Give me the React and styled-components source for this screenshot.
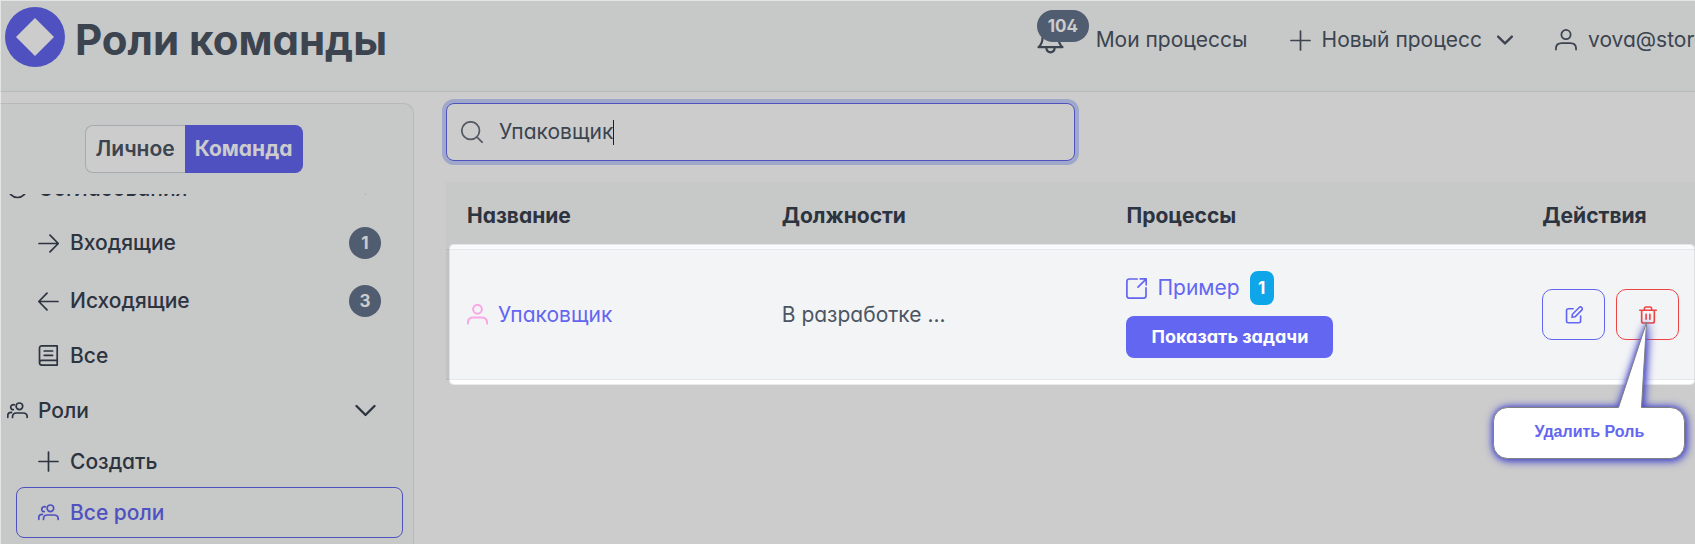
import React from "react";
import styled, { createGlobalStyle, css } from "styled-components";

const GlobalStyle = createGlobalStyle`
  *, *::before, *::after { box-sizing: border-box; }
  body {
    margin: 0;
    background: #ffffff;
    color: #4b5563;
    font-family: Inter, "Liberation Sans", sans-serif;
    font-feature-settings: "cv02", "cv03", "cv04", "cv11";
    font-size: 21px;
    line-height: 26px;
  }
  button, input { font: inherit; font-feature-settings: inherit; color: inherit; }
  a { color: inherit; text-decoration: none; }
`;

/* ---------- icons ---------- */

const Svg = styled.svg`
  display: block;
  flex: none;
  width: ${(p) => p.$size || 21}px;
  height: ${(p) => p.$size || 21}px;
  fill: none;
  stroke: currentColor;
  stroke-width: ${(p) => p.$weight || 1.7};
  stroke-linecap: round;
  stroke-linejoin: round;
`;

const paths = {
  plus: <path d="M10.5 1v19M1 10.5h19" />,
  right: <path d="M1 10.5h19M12 2.200l8.300 8.300-8.300 8.300" />,
  left: <path d="M20 10.5H1M9 2.200L.8 10.5 9 18.8" />,
  down: <path d="M1.5 6l9 9 9-9" />,
  book: (
    <path d="M4 .9h15.2v19.2H3.8a2.3 2.3 0 0 1-2.3-2.3V3.2A2.3 2.3 0 0 1 4 .9zM1.5 17.6a2.3 2.3 0 0 1 2.3-2.2h15.4M6.2 6h8.4M6.2 10.3h8.4" />
  ),
  check: <circle cx="10.5" cy="10.5" r="9" />,
  search: (
    <>
      <circle cx="9.2" cy="9.2" r="8.4" />
      <path d="M15.3 15.3l5 5" />
    </>
  ),
  user: (
    <>
      <circle cx="10.5" cy="5.3" r="4.4" />
      <path d="M.9 19.6v-.8c0-3.4 2.4-5.3 5.6-5.3h8c3.2 0 5.6 1.9 5.6 5.3v.8" />
    </>
  ),
  users: (
    <>
      <circle cx="12.4" cy="6.3" r="3.3" />
      <path d="M5.5 17.5v-.6c0-2.5 1.5-3.9 3.9-3.9h6.7c2.5 0 4.1 1.4 4.1 3.9v.6" />
      <path d="M7.2 4.9a2.5 2.5 0 1 0-.9 4.8M.8 17.3v-1.7c0-2 1.3-3.2 3.7-3.2" />
    </>
  ),
  external: (
    <path d="M11.2 1H3.2A2.3 2.3 0 0 0 .9 3.3v14.5a2.3 2.3 0 0 0 2.3 2.3h14.5a2.3 2.3 0 0 0 2.3-2.3v-7.9M14.3.9h5.9v5.9M20 1.1l-8 8" />
  ),
  pencil: (
    <path d="M9.5 3.2H3.8a2 2 0 0 0-2 2v12.3a2 2 0 0 0 2 2h12.4a2 2 0 0 0 2-2v-5.7M8.2 13.2l.5-3.6 7.8-7.8a2.1 2.1 0 0 1 3 3l-7.8 7.8z" />
  ),
  trash: (
    <path d="M.9 4.900h19.200M6.300 4.700V2.900A1.700 1.700 0 0 1 8 1.200h5a1.700 1.700 0 0 1 1.700 1.700v1.800M3.100 5v12.700a2.100 2.100 0 0 0 2.100 2.100h10.600a2.100 2.100 0 0 0 2.100-2.100V5M8.300 9.700v5.700M12.700 9.700v5.700" />
  ),
  bell: (
    <path d="M1.2 15.7h18.6c-1.8-1.5-3.2-3-3.2-8.3a6.1 6.1 0 0 0-12.2 0c0 5.3-1.4 6.8-3.2 8.3zM7.3 17c.4 1.7 1.5 2.7 3.2 2.7s2.8-1 3.2-2.7" />
  ),
};

const Icon = ({ name, size, weight }) => (
  <Svg viewBox="0 0 21 21" $size={size} $weight={weight} aria-hidden="true">
    {paths[name]}
  </Svg>
);

/* ---------- page frame ---------- */

const Page = styled.div`
  position: relative;
  display: flex;
  flex-direction: column;
  height: 100vh;
  overflow: hidden;
  &::after {
    content: "";
    position: absolute;
    inset: 0;
    z-index: 20;
    border-top: 1px solid rgba(255, 255, 255, 0.5);
    border-left: 1px solid rgba(255, 255, 255, 0.5);
    pointer-events: none;
  }
`;

const Header = styled.header`
  display: flex;
  flex: none;
  padding: 7px 0 18px 5px;
  background: #f9fafb;
  border-bottom: 1px solid #e5e7eb;
`;

const Logo = styled.svg`
  flex: none;
  width: 60px;
  height: 60px;
  margin-right: 10px;
`;

const Title = styled.h1`
  margin: 0;
  font-size: 42px;
  line-height: 66px;
  font-weight: 700;
  white-space: nowrap;
`;

const TopNav = styled.nav`
  display: flex;
  align-items: center;
  gap: 42px;
  margin-left: auto;
  white-space: nowrap;
`;

const TopLink = styled.a`
  display: flex;
  align-items: center;
  gap: ${(p) => p.$gap || 11}px;
`;

const MenuButton = styled.button`
  display: flex;
  align-items: center;
  gap: 11px;
  padding: 0;
  border: 0;
  background: none;
  & > svg:last-child { margin-left: 4px; }
`;

const Account = styled(TopLink)`
  width: 140px;
  overflow: hidden;
`;

const BellBox = styled.span`
  position: relative;
`;

const Badge = styled.span`
  display: flex;
  align-items: center;
  justify-content: center;
  min-width: 32px;
  height: 32px;
  padding: 0 11px;
  border-radius: 16px;
  background: #64748b;
  color: #ffffff;
  font-size: 17px;
  font-weight: 700;
  ${(p) =>
    p.$info &&
    css`
      min-width: 24px;
      height: 34px;
      padding: 0 8px;
      border-radius: 8px;
      background: #0ea5e9;
    `}
`;

const BellBadge = styled(Badge)`
  position: absolute;
  top: -17px;
  left: 0;
`;

const Body = styled.div`
  display: flex;
  flex: 1;
  gap: 32px;
  min-height: 0;
  padding-top: 11px;
`;

/* ---------- sidebar ---------- */

const Sidebar = styled.aside`
  display: flex;
  flex-direction: column;
  flex: none;
  width: 414px;
  padding-top: 21px;
  background: #f9fafb;
  border: 1px solid #e5e7eb;
  border-width: 1px 1px 0 0;
  border-top-right-radius: 10px;
`;

const Toggle = styled.div`
  display: flex;
  flex: none;
  justify-content: center;
  padding: 0 25px 21px 0;
`;

const ToggleButton = styled.button`
  height: 48px;
  padding: 0 10px;
  border: 1px solid ${(p) => (p.$active ? "#6366f1" : "#d1d5db")};
  border-radius: ${(p) => (p.$active ? "0 8px 8px 0" : "8px 0 0 8px")};
  border-right-width: ${(p) => (p.$active ? 1 : 0)}px;
  border-left-width: ${(p) => (p.$active ? 0 : 1)}px;
  background: ${(p) => (p.$active ? "#6366f1" : "#ffffff")};
  color: ${(p) => (p.$active ? "#ffffff" : "#4b5563")};
  font-weight: ${(p) => (p.$active ? 700 : 600)};
`;

const MenuScroll = styled.nav`
  flex: 1;
  min-height: 0;
  overflow: hidden;
`;

const Menu = styled.ul`
  display: flex;
  flex-direction: column;
  gap: 4px;
  margin: -31px 10px 0 0;
  padding: 0;
  list-style: none;
`;

const SubMenu = styled.ul`
  margin: 0;
  padding: 0 0 0 16px;
  list-style: none;
`;

const MenuLink = styled.a`
  display: flex;
  align-items: center;
  gap: ${(p) => (p.$top ? 10 : 11)}px;
  height: ${(p) => (p.$tall ? 58 : 51)}px;
  padding: 0 21px ${(p) => (p.$top ? "0 6px" : "")};
  border: 1px solid ${(p) => (p.$active ? "#6366f1" : "transparent")};
  border-radius: 8px;
  color: ${(p) => (p.$active ? "#6366f1" : "#374151")};
  font-weight: 500;
`;

const Trailing = styled.span`
  display: flex;
  justify-content: center;
  width: 32px;
  margin-left: auto;
`;

/* ---------- content ---------- */

const Main = styled.main`
  flex: 1;
  min-width: 0;
`;

const SearchBox = styled.label`
  display: flex;
  align-items: center;
  width: 50.4%;
  height: 58px;
  margin-bottom: 21px;
  padding: 0 16px 0 14px;
  border: 1px solid #6366f1;
  border-radius: 8px;
  background: #ffffff;
  box-shadow: 0 0 0 4px #c7d2fe;
  color: #6b7280;
`;

const SearchInput = styled.input`
  field-sizing: content;
  min-width: 1px;
  margin-left: 16px;
  padding: 0;
  border: 0;
  outline: 0;
  background: none;
  color: #4b5563;
`;

const Caret = styled.span`
  width: 1px;
  height: 25px;
  background: #1f2937;
`;

const TableArea = styled.div`
  position: relative;
`;

/* Dims the whole page except the highlighted table row. */
const Spotlight = styled.div`
  position: absolute;
  inset: 62px 0 -5px 3px;
  z-index: 5;
  border: 1px solid rgba(0, 0, 0, 0.08);
  border-radius: 5px;
  box-shadow: 0 0 0 9999px rgba(0, 0, 0, 0.2);
  pointer-events: none;
`;

const Table = styled.table`
  width: 100%;
  table-layout: fixed;
  border-collapse: separate;
  border-spacing: 0;
`;

const Col = styled.col`
  width: ${(p) => p.$w};
`;

const Th = styled.th`
  height: 68px;
  padding: 0 0 0 21px;
  border-bottom: 1px solid #e5e7eb;
  background: #f9fafb;
  color: #374151;
  font-weight: 700;
  text-align: left;
`;

const Td = styled.td`
  padding: 21px 0 21px 21px;
  border-bottom: 1px solid #e5e7eb;
  background: #f3f4f6;
  white-space: nowrap;
`;

const CellLink = styled.a`
  display: flex;
  align-items: center;
  gap: 10px;
  color: #6366f1;
`;

const PinkIcon = styled.span`
  color: #f9a8e4;
`;

const Stack = styled.div`
  display: flex;
  flex-direction: column;
  align-items: flex-start;
  gap: 11px;
`;

const PrimaryButton = styled.button`
  height: 42px;
  padding: 0 25px;
  border: 0;
  border-radius: 8px;
  background: #6366f1;
  color: #ffffff;
  font-size: 18px;
  font-weight: 700;
`;

const Actions = styled.div`
  display: flex;
  gap: 11px;
`;

const ActionButton = styled.button`
  display: flex;
  align-items: center;
  justify-content: center;
  width: 63px;
  height: 51px;
  padding: 0;
  border: 1px solid currentColor;
  border-radius: 10px;
  background: transparent;
  color: ${(p) => (p.$danger ? "#ef4444" : "#6366f1")};
`;

const Anchor = styled.div`
  position: relative;
`;

const Callout = styled.div`
  position: absolute;
  top: 33px;
  right: -6px;
  z-index: 10;
  display: flex;
  align-items: flex-end;
  width: 192px;
  height: 137px;
  color: #6366f1;
  font-family: "Liberation Sans", Arial, sans-serif;
  font-size: 16px;
  font-weight: 700;
`;

const CalloutShape = styled.svg`
  position: absolute;
  inset: 0;
  overflow: visible;
  fill: #ffffff;
  stroke: #808080;
  filter: drop-shadow(1px 1px 4px #4a4cc0) drop-shadow(0 0 2px #6366d8);
`;

const CalloutText = styled.span`
  position: relative;
  width: 100%;
  line-height: 54px;
  text-align: center;
`;

const approvals = [
  { icon: "right", label: "Входящие", badge: 1 },
  { icon: "left", label: "Исходящие", badge: 3 },
  { icon: "book", label: "Все" },
];

const roles = [
  { icon: "plus", label: "Создать" },
  { icon: "users", label: "Все роли", active: true },
];

const MenuGroup = ({ icon, label, items }) => (
  <li>
    <MenuLink href="#" $top>
      <Icon name={icon} />
      {label}
      <Trailing>
        <Icon name="down" weight={2.3} />
      </Trailing>
    </MenuLink>
    <SubMenu>
      {items.map((item) => (
        <li key={item.label}>
          <MenuLink href="#" $tall={Boolean(item.badge)} $active={item.active}>
            <Icon name={item.icon} />
            {item.label}
            {item.badge && (
              <Trailing>
                <Badge>{item.badge}</Badge>
              </Trailing>
            )}
          </MenuLink>
        </li>
      ))}
    </SubMenu>
  </li>
);

export default function App() {
  return (
    <Page>
      <GlobalStyle />
      <Header>
        <Logo viewBox="0 0 60 60" aria-hidden="true">
          <circle cx="30" cy="30" r="30" fill="#6366f1" />
          <path d="M30 11l19 19-19 19-19-19z" fill="#ffffff" />
        </Logo>
        <Title>Роли команды</Title>
        <TopNav>
          <TopLink href="#" $gap={32}>
            <BellBox>
              <Icon name="bell" size={27} />
              <BellBadge>104</BellBadge>
            </BellBox>
            Мои процессы
          </TopLink>
          <MenuButton type="button">
            <Icon name="plus" />
            Новый процесс
            <Icon name="down" size={16} weight={3} />
          </MenuButton>
          <Account href="#">
            <Icon name="user" size={22} />
            vova@stormbpmn.com
          </Account>
        </TopNav>
      </Header>
      <Body>
        <Sidebar>
          <Toggle>
            <ToggleButton type="button">Личное</ToggleButton>
            <ToggleButton type="button" $active>
              Команда
            </ToggleButton>
          </Toggle>
          <MenuScroll>
            <Menu>
              <MenuGroup icon="check" label="Согласования" items={approvals} />
              <MenuGroup icon="users" label="Роли" items={roles} />
            </Menu>
          </MenuScroll>
        </Sidebar>
        <Main>
          <SearchBox>
            <Icon name="search" size={22} />
            <SearchInput type="text" aria-label="Поиск" defaultValue="Упаковщик" />
            <Caret />
          </SearchBox>
          <TableArea>
            <Table>
              <colgroup>
                <Col $w="25.2%" />
                <Col $w="27.6%" />
                <Col $w="33.3%" />
                <Col />
              </colgroup>
              <thead>
                <tr>
                  <Th>Название</Th>
                  <Th>Должности</Th>
                  <Th>Процессы</Th>
                  <Th>Действия</Th>
                </tr>
              </thead>
              <tbody>
                <tr>
                  <Td>
                    <CellLink href="#">
                      <PinkIcon>
                        <Icon name="user" weight={2} />
                      </PinkIcon>
                      Упаковщик
                    </CellLink>
                  </Td>
                  <Td>В разработке ...</Td>
                  <Td>
                    <Stack>
                      <CellLink href="#">
                        <Icon name="external" />
                        Пример
                        <Badge $info>1</Badge>
                      </CellLink>
                      <PrimaryButton type="button">Показать задачи</PrimaryButton>
                    </Stack>
                  </Td>
                  <Td>
                    <Actions>
                      <ActionButton type="button" aria-label="Изменить">
                        <Icon name="pencil" size={18} weight={1.9} />
                      </ActionButton>
                      <Anchor>
                        <ActionButton type="button" $danger aria-label="Удалить">
                          <Icon name="trash" size={18} weight={1.9} />
                        </ActionButton>
                        <Callout role="tooltip">
                          <CalloutShape width="192" height="137" viewBox="0 0 192 137" aria-hidden="true">
                            <path d="M14.5 85.5H125.5L153.5.5 148.5 85.5H177.5a14 14 0 0 1 14 14V122.5a14 14 0 0 1-14 14H14.5a14 14 0 0 1-14-14V99.5a14 14 0 0 1 14-14z" />
                          </CalloutShape>
                          <CalloutText>Удалить Роль</CalloutText>
                        </Callout>
                      </Anchor>
                    </Actions>
                  </Td>
                </tr>
              </tbody>
            </Table>
            <Spotlight />
          </TableArea>
        </Main>
      </Body>
    </Page>
  );
}
